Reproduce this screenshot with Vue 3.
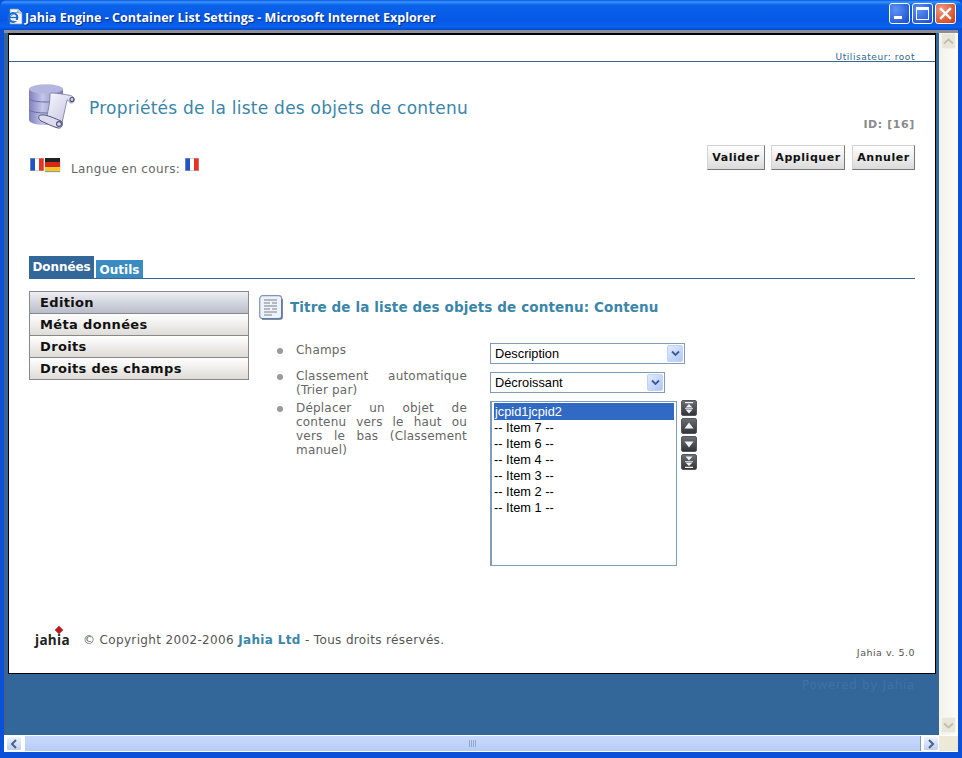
<script setup>
const menu = [
  { label: 'Edition', active: true },
  { label: 'Méta données' },
  { label: 'Droits' },
  { label: 'Droits des champs' }
]
const items = ['-- Item 7 --', '-- Item 6 --', '-- Item 4 --', '-- Item 3 --', '-- Item 2 --', '-- Item 1 --']
</script>

<template>
  <div class="window">
    <header class="titlebar">
      <svg class="ie" width="17" height="17" viewBox="0 0 17 17">
        <path d="M4 1h8l4 4v11H4z" fill="#f4f6fa" stroke="#8f9aa8" stroke-width=".7"/>
        <path d="M12 1v4h4" fill="#d6dbe4" stroke="#8f9aa8" stroke-width=".6"/>
        <circle cx="7" cy="9.500" r="4.300" fill="none" stroke="#1b6ed0" stroke-width="2.200"/>
        <path d="M3 9.500h8" stroke="#1b6ed0" stroke-width="1.300"/>
        <path d="M8 12.500h4" stroke="#f4f6fa" stroke-width="1.200"/>
        <path d="M1 15C3 8 8 5 12 4" fill="none" stroke="#1b6ed0" stroke-width=".8"/>
      </svg>
      <span class="title">Jahia Engine - Container List Settings - Microsoft Internet Explorer</span>
      <div class="controls">
        <span class="wbtn"><i class="min"></i></span>
        <span class="wbtn"><i class="max"></i></span>
        <span class="wbtn close">
          <svg width="13" height="13" viewBox="0 0 13 13"><path d="M2 2l9 9M11 2l-9 9" stroke="#fff" stroke-width="2.400" stroke-linecap="square"/></svg>
        </span>
      </div>
    </header>

    <div class="client">
      <div class="view">
        <div class="row-main">
          <div class="canvas">
            <main class="panel">
              <div class="userbar">Utilisateur: root</div>

              <section class="head">
                <div class="head-top">
                  <svg class="dbicon" width="49" height="47" viewBox="0 0 49 47">
                    <defs>
                      <linearGradient id="db" x1="0" x2="1" y1="0" y2="0">
                        <stop offset="0" stop-color="#7d7fbe"/><stop offset=".4" stop-color="#c5c6ea"/><stop offset="1" stop-color="#7a7bb6"/>
                      </linearGradient>
                      <linearGradient id="sc" x1="0" x2="1" y1="0" y2="1">
                        <stop offset="0" stop-color="#f8f8fd"/><stop offset="1" stop-color="#bfc0de"/>
                      </linearGradient>
                    </defs>
                    <path d="M1 5v31c0 3 8 5 17 5s17-2 17-5V5z" fill="url(#db)"/>
                    <ellipse cx="18" cy="5" rx="17" ry="4.700" fill="#b5b6e0"/>
                    <path d="M1 15c4 4 30 4 34 0M1 26c4 4 30 4 34 0" fill="none" stroke="#6c6d9a" stroke-width="1"/>
                    <path d="M23 9c6 0 18 2 21 3 3 2 3 7-1 7-2 0-2-3-4-3l-5 23-15-7c1-5 3-14 3-20 0-2 0-3 1-3z" fill="url(#sc)" stroke="#75769e" stroke-width=".8"/>
                    <path d="M13 31c5-1 15 4 20 6 3 2 1 8-3 7-5-1-12-5-17-7-3-2-3-6 0-6z" fill="#dcdcee" stroke="#55567e" stroke-width="1"/>
                    <circle cx="31" cy="40" r="2.400" fill="none" stroke="#4d4e78" stroke-width="1.100"/>
                    <circle cx="44" cy="15.500" r="2" fill="none" stroke="#4d4e78" stroke-width="1.100"/>
                  </svg>
                  <h1>Propriétés de la liste des objets de contenu</h1>
                  <div class="idtag">ID: [16]</div>
                </div>
                <div class="head-bottom">
                  <div class="langs">
                    <span class="flag fr"></span><span class="flag de"></span>
                    <span class="lang-label">Langue en cours:</span>
                    <span class="flag fr"></span>
                  </div>
                  <div class="actions">
                    <button type="button" class="act">Valider</button>
                    <button type="button" class="act">Appliquer</button>
                    <button type="button" class="act">Annuler</button>
                  </div>
                </div>
              </section>

              <nav class="tabs">
                <span class="tab on">Données</span>
                <span class="tab off">Outils</span>
              </nav>

              <section class="body">
                <ul class="side">
                  <li v-for="m in menu" :key="m.label" :class="{ active: m.active }">{{ m.label }}</li>
                </ul>
                <div class="content">
                  <div class="ctitle">
                    <svg width="24" height="25" viewBox="0 0 24 25">
                      <rect x=".7" y=".7" width="22" height="23" rx="3" fill="#eef2fb" stroke="#7f93b8" stroke-width="1.200"/>
                      <path d="M23 4v18a2 2 0 0 1-2 2H3" fill="none" stroke="#5f7396" stroke-width="1.600"/>
                      <path d="M5 5h13M5 8h6m2 0h5M5 11h13M5 14h6m2 0h5M5 17h13M5 20h8" stroke="#7b7f88" stroke-width="1.100"/>
                    </svg>
                    <h2>Titre de la liste des objets de contenu: Contenu</h2>
                  </div>
                  <div class="form">
                    <div class="frow r1">
                      <div class="flabel">Champs</div>
                      <div class="field"><div class="sel w195"><span>Description</span><i class="arrow"><svg width="9" height="7" viewBox="0 0 9 7"><path d="M1 1.500l3.500 3.500L8 1.500" fill="none" stroke="#3f5a94" stroke-width="1.800"/></svg></i></div></div>
                    </div>
                    <div class="frow r2">
                      <div class="flabel">Classement automatique (Trier par)</div>
                      <div class="field"><div class="sel w175"><span>Décroissant</span><i class="arrow"><svg width="9" height="7" viewBox="0 0 9 7"><path d="M1 1.500l3.500 3.500L8 1.500" fill="none" stroke="#3f5a94" stroke-width="1.800"/></svg></i></div></div>
                    </div>
                    <div class="frow r3">
                      <div class="flabel">Déplacer un objet de contenu vers le haut ou vers le bas (Classement manuel)</div>
                      <div class="field listfield">
                        <div class="listbox">
                          <div class="opt sel-opt">jcpid1jcpid2</div>
                          <div v-for="it in items" :key="it" class="opt">{{ it }}</div>
                        </div>
                        <div class="moves">
                          <span class="mv"><svg width="10" height="12" viewBox="0 0 10 12"><path d="M1 0h8v1.300H1zM5 2l3.500 3.500h-7zM1 6h8v.8H1zM5 11.500L1.500 7.500h7z" fill="#f2f2f2"/></svg></span>
                          <span class="mv"><svg width="10" height="12" viewBox="0 0 10 12"><path d="M5 2.500l4.500 6h-9z" fill="#f2f2f2"/></svg></span>
                          <span class="mv"><svg width="10" height="12" viewBox="0 0 10 12"><path d="M5 9.500l4.500-6h-9z" fill="#f2f2f2"/></svg></span>
                          <span class="mv"><svg width="10" height="12" viewBox="0 0 10 12"><path d="M1.500 .5h7L5 4.500zM1 5.200h8v.8H1zM1.500 6.500h7L5 10zM1 10.700h8V12H1z" fill="#f2f2f2"/></svg></span>
                        </div>
                      </div>
                    </div>
                  </div>
                </div>
              </section>

              <footer class="foot">
                <div class="copy">
                  <span class="logo"><b class="dot"></b>jahia</span>
                  <span>© Copyright 2002-2006 <b class="link">Jahia Ltd</b> - Tous droits réservés.</span>
                </div>
                <div class="version">Jahia v. 5.0</div>
              </footer>
            </main>
            <div class="powered">Powered by Jahia</div>
          </div>
          <aside class="vscroll">
            <span class="sbtn"><svg width="11" height="7" viewBox="0 0 11 7"><path d="M1 5.500l4.500-4 4.500 4" fill="none" stroke="#c0c0ae" stroke-width="2"/></svg></span>
            <span class="sbtn"><svg width="11" height="7" viewBox="0 0 11 7"><path d="M1 1.500l4.500 4 4.500-4" fill="none" stroke="#c0c0ae" stroke-width="2"/></svg></span>
          </aside>
        </div>
        <div class="hscroll">
          <span class="harrow"><svg width="8" height="10" viewBox="0 0 8 10"><path d="M6 1L2 5l4 4" fill="none" stroke="#4d6185" stroke-width="2"/></svg></span>
          <div class="thumb"><i></i><i></i><i></i><i></i></div>
          <span class="harrow"><svg width="8" height="10" viewBox="0 0 8 10"><path d="M2 1l4 4-4 4" fill="none" stroke="#4d6185" stroke-width="2"/></svg></span>
          <span class="corner"></span>
        </div>
      </div>
    </div>
  </div>
</template>

<style>
html, body { margin: 0; padding: 0; background: #0a4fd6; overflow: hidden; }
</style>

<style scoped>
* { box-sizing: border-box; }
.window { width: 962px; height: 758px; display: flex; flex-direction: column; background: #0a50d8; font-family: "DejaVu Sans", Verdana, sans-serif; overflow: hidden; }

.titlebar { height: 30px; flex: none; display: flex; align-items: center; padding: 0 6px 0 6px; background: linear-gradient(#0a5ae0 0, #3a93ff 2px, #0a62ea 5px, #0558e4 20px, #0a62f0 27px, #0548c8 30px); border-radius: 7px 7px 0 0; }
.ie { flex: none; margin: 2px 2px 0 0; }
.title { color: #fff; font: 700 12.550px "Open Sans", sans-serif; text-shadow: 1px 1px 1px #0a2f90; white-space: nowrap; margin-top: 4px; }
.controls { margin-left: auto; display: flex; gap: 2px; margin-top: -3px; }
.wbtn { width: 21px; height: 21px; border: 1px solid #fff; border-radius: 3px; background: radial-gradient(circle at 30% 30%, #5f93f2, #2a5fdc 70%, #1e47c0); display: flex; align-items: center; justify-content: center; }
.wbtn.close { background: radial-gradient(circle at 30% 30%, #f09a80, #da5a36 65%, #c03a1c); }
.min { display: block; width: 8px; height: 3px; background: #fff; margin-top: 8px; margin-right: 4px; }
.max { display: block; width: 13px; height: 13px; border: 1px solid #fff; border-top-width: 3px; }

.client { flex: 1; min-height: 0; padding: 0 4px 6px 4px; display: flex; }
.view { flex: 1; display: flex; flex-direction: column; min-width: 0; border-top: 3px solid #8a9099; }
.row-main { flex: 1; display: flex; min-height: 0; }
.canvas { flex: 1; min-width: 0; background: #336699; padding: 0 3px 0 3px; border-left: 1px solid #4a5c80; }
.panel { height: 641px; background: #fff; border: 1px solid #000; border-top-width: 2px; display: flex; flex-direction: column; padding: 0 20px; }

.userbar { margin: 0 -20px; height: 27px; padding: 17px 20px 0 0; border-bottom: 1px solid #336699; text-align: right; font-size: 9px; letter-spacing: .55px; line-height: 11px; color: #336688; }

.head { height: 194px; flex: none; }
.head-top { display: flex; align-items: flex-start; height: 61px; padding-top: 22px; }
.dbicon { flex: none; margin-left: -1px; }
h1 { margin: 14px 0 0 12px; font-size: 17px; line-height: 20px; font-weight: 400; letter-spacing: .25px; color: #3a86a8; white-space: nowrap; }
.idtag { margin-left: auto; padding-top: 34px; font-size: 11px; line-height: 14px; font-weight: 700; letter-spacing: .6px; color: #8a8a8a; }
.head-bottom { display: flex; justify-content: space-between; margin-top: 22px; }
.langs { display: flex; align-items: flex-start; padding: 13px 0 0 1px; }
.flag { display: block; width: 14px; height: 13px; flex: none; }
.flag.fr { background: linear-gradient(90deg, #1d52c8 0 33%, #fff 33% 66%, #e8341c 66%); box-shadow: inset 0 0 0 .5px #aac; }
.flag.de { width: 15px; height: 13px; margin-left: 1px; background: linear-gradient(#222 0 34%, #d82818 34% 67%, #f2c820 67%); box-shadow: 0 1px 1px #999; }
.lang-label { margin: 4px 5px 0 11px; font-size: 12px; line-height: 15px; letter-spacing: .35px; color: #666; white-space: nowrap; }
.actions { display: flex; gap: 6px; }
.act { height: 25px; padding: 0; background: linear-gradient(#fff, #dadada); border: 1px solid #d4d4d4; border-right-color: #777; border-bottom-color: #777; font: 700 11px "DejaVu Sans", sans-serif; letter-spacing: .55px; color: #111; border-radius: 0; }
.act:nth-child(1) { width: 58px; }
.act:nth-child(2) { width: 74px; }
.act:nth-child(3) { width: 63px; margin-left: 1px; }

.tabs { flex: none; height: 23px; display: flex; align-items: flex-end; gap: 2px; border-bottom: 1px solid #336699; }
.tab { display: block; color: #fff; font-weight: 700; font-size: 12px; }
.tab.on { height: 22px; width: 65px; background: #336699; text-align: center; line-height: 23px; letter-spacing: -.1px; }
.tab.off { height: 18px; width: 47px; background: #3a8cc0; text-align: center; line-height: 21px; }

.body { flex: none; display: flex; padding-top: 12px; height: 337px; }
.side { list-style: none; margin: 0; padding: 0; width: 220px; height: 89px; flex: none; border: 1px solid #888; }
.side li { height: 22px; padding-left: 10px; line-height: 22px; font-size: 13px; font-weight: 700; letter-spacing: .35px; color: #111; background: linear-gradient(#fff, #dedcd8); border-bottom: 1px solid #888; }
.side li:last-child { border-bottom: 0; height: 21px; }
.side li.active { background: linear-gradient(#eeeef2, #b9bdca); }

.content { flex: 1; min-width: 0; padding-left: 10px; }
.ctitle { display: flex; align-items: center; height: 25px; margin-top: 4px; }
.ctitle svg { flex: none; }
h2 { margin: 0 0 2px 7px; font-size: 13.500px; line-height: 18px; font-weight: 700; color: #3a86a8; letter-spacing: .12px; white-space: nowrap; }

.form { margin-top: 22px; }
.frow { display: grid; grid-template-columns: 208px 1fr; position: relative; }
.frow::before { content: ""; position: absolute; left: 18px; top: 6px; width: 6px; height: 6px; border-radius: 50%; background: #999; }
.r1 { height: 26px; }
.r2 { height: 32px; }
.flabel { padding: 1px 0 0 37px; font-size: 12px; line-height: 14px; letter-spacing: .2px; color: #666; text-align: justify; }
.field { padding: 1px 0 0 23px; }
.r2 .field { padding-top: 4px; }
.sel { height: 21px; border: 1px solid #7f9db9; display: flex; align-items: center; justify-content: space-between; padding: 0 1px 0 4px; font: 12.800px "Liberation Sans", Arial, sans-serif; color: #000; background: #fff; }
.w195 { width: 195px; }
.w175 { width: 175px; }
.arrow { display: flex; align-items: center; justify-content: center; width: 16px; height: 17px; border-radius: 2px; background: linear-gradient(135deg, #e1eafe, #aec8f7); border: 1px solid #c3d3f5; }
.listfield { display: flex; align-items: flex-start; }
.listbox { width: 187px; height: 165px; border: 1px solid #7f9db9; border-left-width: 2px; padding: 1px 2px; background: #fff; font: 12.800px "Liberation Sans", Arial, sans-serif; color: #000; flex: none; }
.opt { height: 16px; line-height: 18px; }
.sel-opt { background: #316ac5; color: #fff; height: 17px; padding-left: 1px; line-height: 17px; margin-bottom: -1px; }
.moves { display: flex; flex-direction: column; gap: 2px; margin: -1px 0 0 4px; }
.mv { width: 16px; height: 16px; border-radius: 2px; background: linear-gradient(#6b6d74, #33353b); border: 1px solid #55575c; display: flex; align-items: center; justify-content: center; }

.foot { flex: none; height: 55px; padding-top: 8px; display: flex; justify-content: space-between; align-items: flex-start; }
.copy { display: flex; align-items: center; font-size: 12px; line-height: 16px; letter-spacing: .35px; color: #555; padding-left: 6px; height: 32px; }
.logo { position: relative; display: inline-block; width: 48px; font: 700 13.500px "Open Sans", sans-serif; letter-spacing: .3px; color: #222; }
.dot { position: absolute; left: 21px; top: -4px; width: 6px; height: 6px; background: #b81c1c; transform: rotate(45deg); }
.link { color: #3a86a8; }
.version { padding-top: 23px; font-size: 9.500px; line-height: 12px; letter-spacing: .5px; color: #555; }

.powered { padding: 3px 21px 0 0; text-align: right; font-size: 12px; line-height: 16px; letter-spacing: .65px; color: #3d72a6; }

.vscroll { width: 19px; flex: none; padding: 0 2px 2px 2px; background: linear-gradient(90deg, #f3f1ea, #fdfcf8); display: flex; flex-direction: column; justify-content: space-between; }
.sbtn { height: 16px; background: #e8e6d8; border: 1px solid #f4f2e8; border-radius: 2px; display: flex; align-items: center; justify-content: center; }

.hscroll { height: 17px; flex: none; display: flex; align-items: stretch; padding: 1px 0 1px 2px; background: #fff; }
.harrow { width: 16px; flex: none; background: linear-gradient(#eef3fe, #bcd0f6); border: 1px solid #fff; border-radius: 2px; display: flex; align-items: center; justify-content: center; }
.thumb { flex: 1; margin: 0 2px; background: linear-gradient(#c9d8f9, #b7cdf6); border-right: 1px solid #7f9db9; border-left: 1px solid #fff; display: flex; align-items: center; justify-content: center; gap: 1px; }
.thumb i { width: 1px; height: 7px; background: #8ea8d8; }
.corner { width: 19px; flex: none; background: #ece9d8; }
</style>
